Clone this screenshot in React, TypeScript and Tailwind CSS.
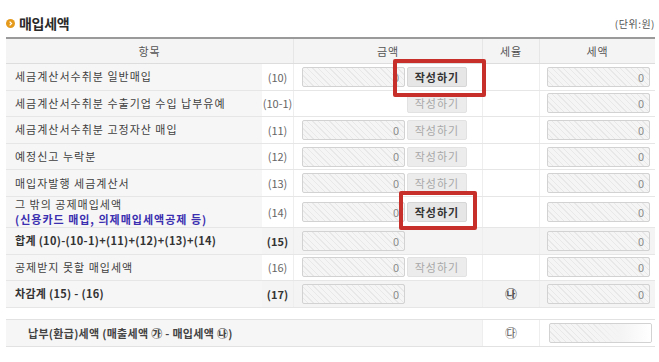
import type { ReactNode } from "react";

const font = "font-['Noto_Sans_CJK_KR','Noto_Sans',sans-serif]";
const hatch =
  "bg-[repeating-linear-gradient(45deg,#f5f5f5_0px,#f5f5f5_3px,#e8e8e8_3px,#e8e8e8_4px)]";

function Field({ fade = false }: { fade?: boolean }) {
  return (
    <div
      className={`relative flex h-[20px] w-[103px] items-center justify-end overflow-hidden rounded-[2px] border border-[#d2d2d2] pr-[5px] text-[11px] text-[#8a8a8a] ${hatch}`}
    >
      {fade ? (
        <span className="absolute inset-y-0 right-0 w-[60px] bg-gradient-to-r from-transparent via-[#f4f4f4] to-white" />
      ) : (
        "0"
      )}
    </div>
  );
}

function WriteBtn({ active }: { active?: boolean }) {
  return (
    <div
      className={`flex h-[20px] w-[60px] items-center justify-center rounded-[2px] border text-[11px] tracking-[1px] ${
        active
          ? "border-[#d6d6d6] bg-[#e6e6e6] font-bold text-[#333]"
          : "border-[#e2e2e2] bg-[#ececec] text-[#a8a8a8]"
      }`}
    >
      작성하기
    </div>
  );
}

type RowProps = {
  label: ReactNode;
  num: string;
  strong?: boolean;
  amount?: boolean;
  button?: "active" | "off";
  rate?: ReactNode;
  gray?: boolean;
  tall?: boolean;
};

function Row({ label, num, strong, amount = true, button, rate, gray, tall }: RowProps) {
  const cellBg = gray ? "bg-[#f4f4f4]" : "bg-white";
  return (
    <div
      className={`grid grid-cols-[256px_31px_189px_57px_116px] border-b border-[#e6e6e6] ${
        tall ? "h-[31px]" : "h-[26.6px]"
      }`}
    >
      <div
        className={`flex flex-col justify-center bg-[#f6f6f6] pl-[9px] text-[11px] leading-[15px] ${
          strong ? "font-bold tracking-[0.3px] text-[#333]" : "tracking-[1px] text-[#3f3f3f]"
        }`}
      >
        {label}
      </div>
      <div
        className={`flex items-center justify-center text-[11px] ${cellBg} ${
          strong ? "font-bold text-[#333]" : "text-[#666]"
        }`}
      >
        {num}
      </div>
      <div className={`flex items-center gap-[2px] border-l border-[#eeeeee] pl-[8px] ${cellBg}`}>
        {amount ? <Field /> : <div className="w-[103px]" />}
        {button && <WriteBtn active={button === "active"} />}
      </div>
      <div
        className={`flex items-center justify-center border-l border-[#eeeeee] text-[12px] font-bold text-[#555] ${cellBg}`}
      >
        {rate}
      </div>
      <div className={`flex items-center border-l border-[#eeeeee] pl-[7px] ${cellBg}`}>
        <Field />
      </div>
    </div>
  );
}

export default function App() {
  return (
    <div className={`relative h-[362px] w-[659px] overflow-hidden bg-white ${font}`}>
      <div className="pl-[6px] pr-[4px] pt-[12px]">
        {/* title */}
        <div className="flex h-[22px] items-center justify-between">
          <div className="flex items-center gap-[4px]">
            <span className="flex h-[9px] w-[9px] items-center justify-center rounded-full bg-[#e59a1c]">
              <svg viewBox="0 0 8 8" className="h-[7px] w-[7px]">
                <path d="M3 1.8 L5.2 4 L3 6.2" fill="none" stroke="#fff" strokeWidth="1.4" />
              </svg>
            </span>
            <span className="text-[14px] font-bold tracking-[-0.3px] text-[#2a2a2a]">매입세액</span>
          </div>
          <span className="text-[10px] tracking-[0.5px] text-[#555]">(단위:원)</span>
        </div>

        {/* table */}
        <div className="mt-[3px] border-t-2 border-[#9a9a9a]">
          <div className="grid h-[25px] grid-cols-[287px_189px_57px_116px] border-b border-[#dddddd] bg-[#f4f4f4] text-[11px] tracking-[1px] text-[#555]">
            <div className="flex items-center justify-center">항목</div>
            <div className="flex items-center justify-center border-l border-[#e6e6e6]">금액</div>
            <div className="flex items-center justify-center border-l border-[#e6e6e6]">세율</div>
            <div className="flex items-center justify-center border-l border-[#e6e6e6]">세액</div>
          </div>

          <Row label="세금계산서수취분 일반매입" num="(10)" button="active" />
          <Row label="세금계산서수취분 수출기업 수입 납부유예" num="(10-1)" amount={false} button="off" />
          <Row label="세금계산서수취분 고정자산 매입" num="(11)" button="off" />
          <Row label="예정신고 누락분" num="(12)" button="off" />
          <Row label="매입자발행 세금계산서" num="(13)" button="off" />
          <Row
            tall
            label={
              <>
                <span className="block h-[15px] leading-[15px]">그 밖의 공제매입세액</span>
                <span className="block h-[15px] font-bold leading-[15px] text-[#3b2fb0]">
                  (신용카드 매입, 의제매입세액공제 등)
                </span>
              </>
            }
            num="(14)"
            button="active"
          />
          <Row strong gray label="합계 (10)-(10-1)+(11)+(12)+(13)+(14)" num="(15)" />
          <Row label="공제받지 못할 매입세액" num="(16)" button="off" />
          <Row strong gray label="차감계 (15) - (16)" num="(17)" rate="㉯" />
        </div>

        {/* payable */}
        <div className="mt-[11px] grid h-[28px] grid-cols-[476px_57px_116px] border-y border-[#e2e2e2]">
          <div className="flex items-center bg-[#f6f6f6] pl-[22px] text-[11px] font-bold tracking-[0.3px] text-[#444]">
            납부(환급)세액 (매출세액 ㉮ - 매입세액 ㉯)
          </div>
          <div className="flex items-center justify-center border-l border-[#eeeeee] text-[12px] text-[#666]">
            ㉰
          </div>
          <div className="flex items-center border-l border-[#eeeeee] pl-[9px]">
            <Field fade />
          </div>
        </div>
      </div>

      {/* annotation boxes */}
      <div className="absolute left-[393px] top-[59px] h-[38px] w-[93px] rounded-[2px] border-[4px] border-[#c7302a]" />
      <div className="absolute left-[399px] top-[191px] h-[39px] w-[78px] rounded-[2px] border-[4px] border-[#c7302a]" />
    </div>
  );
}
